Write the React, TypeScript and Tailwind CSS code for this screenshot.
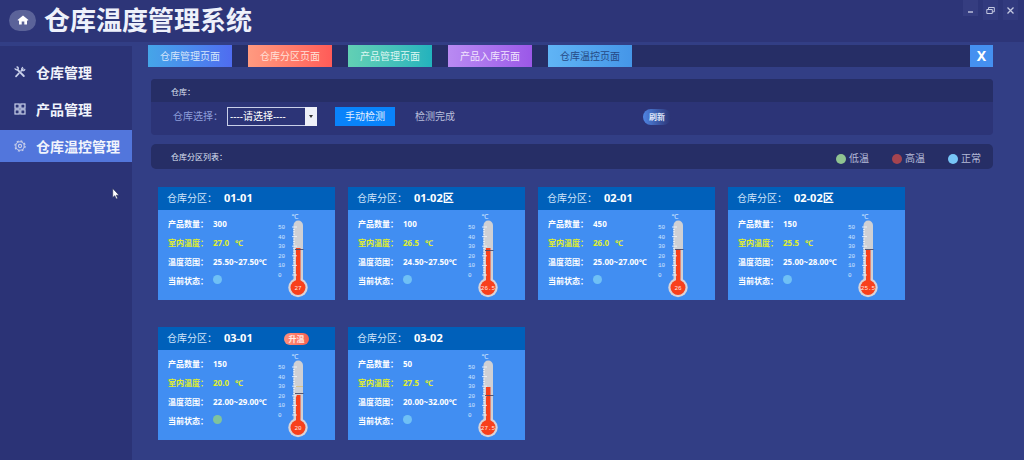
const menu = [
    { label: '仓库管理', icon: 'tools' },
    { label: '产品管理', icon: 'grid' },
    { label: '仓库温控管理', icon: 'gear', active: true },
]

const tabs = [
    { label: '仓库管理页面', style: 'from-[#45a5e8] to-[#4f6cf0] text-[#d5e6fb]' },
    { label: '仓库分区页面', style: 'from-[#ff9a80] to-[#ff5b58] text-[#ffe0d8]' },
    { label: '产品管理页面', style: 'from-[#62d0b4] to-[#22b3bd] text-[#dcf7f2]' },
    { label: '产品入库页面', style: 'from-[#b98af2] to-[#9b58e8] text-[#f1e4fd]' },
    { label: '仓库温控页面', style: 'from-[#60b4f5] to-[#4596e8] text-[#264a86]' },
]

const legend = [
    { label: '低温', color: 'bg-[#8fc391]' },
    { label: '高温', color: 'bg-[#a5444f]' },
    { label: '正常', color: 'bg-[#77c6f7]' },
]

type Zone = {
    name: string
    count: number
    temp: string
    bulb: string
    range: string
    low?: boolean
    level: number
    mark: number
}

// level and mark are y positions inside the thermometer drawing
const zones: Zone[] = [
    { name: '01-01', count: 300, temp: '27.0', bulb: '27', range: '25.50~27.50℃', level: 38, mark: 39 },
    { name: '01-02区', count: 100, temp: '26.5', bulb: '26.5', range: '24.50~27.50℃', level: 38, mark: 40 },
    { name: '02-01', count: 450, temp: '26.0', bulb: '26', range: '25.00~27.00℃', level: 39, mark: 39 },
    { name: '02-02区', count: 150, temp: '25.5', bulb: '25.5', range: '25.00~28.00℃', level: 40, mark: 39 },
    { name: '03-01', count: 150, temp: '20.0', bulb: '20', range: '22.00~29.00℃', low: true, level: 45, mark: 43 },
    { name: '03-02', count: 50, temp: '27.5', bulb: '27.5', range: '20.00~32.00℃', level: 37, mark: 45 },
]

function MenuIcon({ name }: { name: string }) {
    if (name === 'grid') {
        return (
            <svg width="12" height="12" viewBox="0 0 12 12" fill="none" stroke="currentColor" strokeWidth="1.2">
                <rect x="1" y="1" width="4.2" height="4.2" />
                <rect x="6.8" y="1" width="4.2" height="4.2" />
                <rect x="1" y="6.8" width="4.2" height="4.2" />
                <rect x="6.8" y="6.8" width="4.2" height="4.2" />
            </svg>
        )
    }
    if (name === 'gear') {
        return (
            <svg width="12" height="12" viewBox="0 0 12 12" fill="none" stroke="currentColor" strokeWidth="1.1">
                <circle cx="6" cy="6" r="4.2" />
                <circle cx="6" cy="6" r="5.1" strokeWidth="1.2" strokeDasharray="2 2" />
                <circle cx="6" cy="6" r="1.6" />
            </svg>
        )
    }
    return (
        <svg width="12" height="12" viewBox="0 0 12 12" fill="none" stroke="currentColor" strokeLinecap="round">
            <path d="M3.2 3.4 9.8 10" strokeWidth="1.9" />
            <path d="M1 2.8c.8 1.4 2.400 1.400 3.200.2C4.600 2 4 1.200 3 1" strokeWidth="1.3" />
            <path d="M9 3 7.200 4.800M4.800 7.400 2 10.400" strokeWidth="1.7" />
            <path d="M8.600 1.400c-1.400.8-1.200 2.600 0 3.200 1 .4 2-.2 2.200-1.200" strokeWidth="1.2" />
        </svg>
    )
}

function Thermometer({ zone }: { zone: Zone }) {
    return (
        <svg width="36" height="90" viewBox="0 0 36 90" className="shrink-0">
            <text x="19" y="9" textAnchor="middle" fontSize="7" fill="#dbe9fd">℃</text>
            {[50, 40, 30, 20, 10, 0].map((n, i) => (
                <text key={n} x="2" y={19 + i * 9.5} fontSize="6" fill="#d3e5fd" fontFamily="Liberation Mono">{n}</text>
            ))}
            <rect x="17.5" y="10.5" width="9.5" height="64" rx="4.7" fill="#cfd0d4" />
            <circle cx="22" cy="77.5" r="9.7" fill="#d9d3d8" />
            <rect x="20" y={zone.level} width="4.5" height={76 - zone.level} fill="#f8401c" />
            <circle cx="22" cy="77.5" r="7.5" fill="#f8401c" />
            {Array.from({ length: 21 }, (_, i) => (
                <path key={i} d={`M${i % 4 ? 17 : 16} ${17 + i * 2.4}H${i % 4 ? 19 : 21}`} stroke="#f4f7fc" strokeWidth="0.8" />
            ))}
            {zone.low && <path d="M20 36.5h7" stroke="#d8c48e" />}
            <path d={`M19 ${zone.mark + 0.5}h8.5`} stroke="#4b4b66" strokeWidth="0.9" />
            <text x="22" y="79.5" textAnchor="middle" fontSize="6" fill="#ffe6e0" fontFamily="Liberation Mono">{zone.bulb}</text>
        </svg>
    )
}

function ZoneCard({ zone }: { zone: Zone }) {
    return (
        <article className="w-[177px] bg-[#418ef2]">
            <header className="flex h-[23px] items-center bg-[#0060ba] pl-[9px]">
                <span className="w-[57px] text-[10px] text-[#d3e5fa]">仓库分区：</span>
                <h3 className="w-[60px] text-[11px] font-bold text-white">{zone.name}</h3>
                {zone.low && (
                    <button className="h-3 w-[25px] rounded-full bg-gradient-to-r from-[#ff8f7c] to-[#f8604f] text-[8px] leading-3 font-bold text-[#ffe9e4]">升温</button>
                )}
            </header>
            <div className="flex h-[90px]">
                <dl className="grid w-[118px] shrink-0 grid-cols-[45px_1fr] content-start gap-y-[3px] pt-[6px] pl-[10px] text-[8px] leading-4 font-bold whitespace-nowrap text-white">
                    <dt>产品数量：</dt>
                    <dd>{zone.count}</dd>
                    <dt className="text-[#e0f02a]">室内温度：</dt>
                    <dd className="text-[#e0f02a]">{zone.temp}<span className="ml-[6px]">℃</span></dd>
                    <dt>温度范围：</dt>
                    <dd>{zone.range}</dd>
                    <dt>当前状态：</dt>
                    <dd className="pt-0.5">
                        <span className={`block size-[9px] rounded-full ${zone.low ? 'bg-[#80c39c]' : 'bg-[#6fc0f5]'}`} />
                    </dd>
                </dl>
                <Thermometer zone={zone} />
            </div>
        </article>
    )
}

function TitleBar() {
    return (
        <header className="flex h-[42px] items-start justify-between bg-[#2d3578] pr-[6px] pl-[9px]">
            <div className="flex h-10 items-center gap-2">
                <span className="flex h-[21px] w-[27px] items-center justify-center rounded-full bg-[#5b6399]">
                    <svg width="12" height="10" viewBox="0 0 12 10" fill="#fff">
                        <path d="M6 .5 11.500 5l-.8.8-.7-.5V9.500H7.300V6.500H4.700v3H2V5.300l-.7.5L.5 5z" />
                    </svg>
                </span>
                <h1 className="text-[26px] leading-8 font-bold text-[#eef1fb]">仓库温度管理系统</h1>
            </div>
            <div className="flex gap-[5px] text-[#c3c8e0]">
                <button aria-label="最小化" className="flex h-4 w-[15px] items-center justify-center bg-[#353d80]">
                    <svg width="9" height="9" viewBox="0 0 9 9" stroke="currentColor"><path d="M2 8h5" strokeWidth="1.4" /></svg>
                </button>
                <button aria-label="还原" className="flex h-5 w-[15px] items-center justify-center bg-[#323a7e]">
                    <svg width="9" height="9" viewBox="0 0 9 9" fill="none" stroke="currentColor">
                        <path d="M.8 3.500h5.500v4H.8zM2.500 3.300V1.500H8.300v4.300H6.500" />
                    </svg>
                </button>
                <button aria-label="关闭" className="flex h-5 w-[15px] items-center justify-center bg-[#323a7e]">
                    <svg width="9" height="9" viewBox="0 0 9 9" stroke="currentColor" strokeWidth="1.3"><path d="m1.500 1.500 6 6m0-6-6 6" /></svg>
                </button>
            </div>
        </header>
    )
}

function Sidebar() {
    return (
        <nav className="mt-1 flex w-[132px] shrink-0 flex-col gap-[5px] bg-[#2b3376] pt-[10px]">
            {menu.map((item) => (
                <a
                    key={item.label}
                    href="#"
                    className={`flex h-8 items-center gap-[10px] pl-[14px] text-[14px] font-bold text-[#f1f4fc] ${item.active ? 'bg-[#5276dc]' : ''}`}
                >
                    <span className="text-[#c9d0ea]"><MenuIcon name={item.icon} /></span>
                    {item.label}
                </a>
            ))}
        </nav>
    )
}

export default function App() {
    return (
        <div className="flex min-h-screen flex-col bg-[#323e85] font-['Noto_Sans','Noto_Sans_CJK_SC',sans-serif]">
            <TitleBar />
            <div className="flex flex-1">
                <Sidebar />
                <main className="min-w-0 flex-1 pt-[3px] pr-[31px] pl-4">
                    <div className="flex h-[22px] justify-between bg-[#262e66]">
                        <div className="flex gap-4">
                            {tabs.map((tab) => (
                                <button key={tab.label} className={`w-[84px] bg-gradient-to-r text-[10px] ${tab.style}`}>{tab.label}</button>
                            ))}
                        </div>
                        <button className="w-[23px] bg-[#4590f0] text-[14px] leading-5 font-bold text-white">X</button>
                    </div>

                    <div className="pt-3 pl-[3px]">
                        <section className="rounded-[4px] bg-[#2c3477]">
                            <h2 className="h-[23px] rounded-t-[4px] bg-[#262e66] pl-5 text-[8px] leading-[26px] text-[#dfe3f3]">仓库：</h2>
                            <div className="flex h-[33px] items-center pb-3 pt-2 pl-[22px] text-[10px]">
                                <label htmlFor="warehouse" className="w-[54px] text-[#8f9fdb]">仓库选择：</label>
                                <div className="relative">
                                    <select id="warehouse" className="block h-[19px] w-[90px] appearance-none border border-[#c9cfe8] bg-[#2c3477] pl-[2px] text-[10px] text-white">
                                        <option>----请选择----</option>
                                    </select>
                                    <span className="pointer-events-none absolute inset-y-0 right-0 flex w-3 items-center justify-center bg-[#eef0f8]">
                                        <svg width="4" height="3" viewBox="0 0 4 3"><path d="M0 0h4L2 3z" fill="#333" /></svg>
                                    </span>
                                </div>
                                <button className="ml-[18px] h-[19px] w-[60px] bg-[#0983fa] text-[10px] text-[#e2f0ff]">手动检测</button>
                                <output className="ml-5 text-[#b9bfdc]">检测完成</output>
                                <button className="ml-[188px] h-4 w-7 rounded-full bg-gradient-to-r from-[#4f86e4] to-[#2b3374] text-[8px] font-bold text-[#dfe6f8]">刷新</button>
                            </div>
                        </section>

                        <section>
                            <div className="mt-[9px] flex h-[25px] items-center justify-between rounded-[5px] bg-[#262e66] pr-3 pl-5 text-[#dfe3f3]">
                                <h2 className="text-[8px]">仓库分区列表：</h2>
                                <ul className="flex gap-[23px] pt-1 text-[10px] text-[#b5bbd8]">
                                    {legend.map((item) => (
                                        <li key={item.label} className="flex items-center gap-[3px]">
                                            <span className={`size-[10px] rounded-full ${item.color}`} />
                                            {item.label}
                                        </li>
                                    ))}
                                </ul>
                            </div>
                            <div className="mt-[18px] flex flex-wrap gap-x-[13px] gap-y-[27px] pb-5 pl-[7px]">
                                {zones.map((zone) => <ZoneCard key={zone.name} zone={zone} />)}
                            </div>
                        </section>
                    </div>
                </main>
            </div>

            {/* mouse pointer */}
            <svg className="pointer-events-none absolute top-[188px] left-[112px]" width="8" height="12" viewBox="0 0 7 11">
                <path d="M.5.5v8.200l1.900-1.700 1.300 3 1.300-.6-1.300-2.800h2.600z" fill="#fff" stroke="#20264f" strokeWidth="0.5" />
            </svg>
        </div>
    )
}
